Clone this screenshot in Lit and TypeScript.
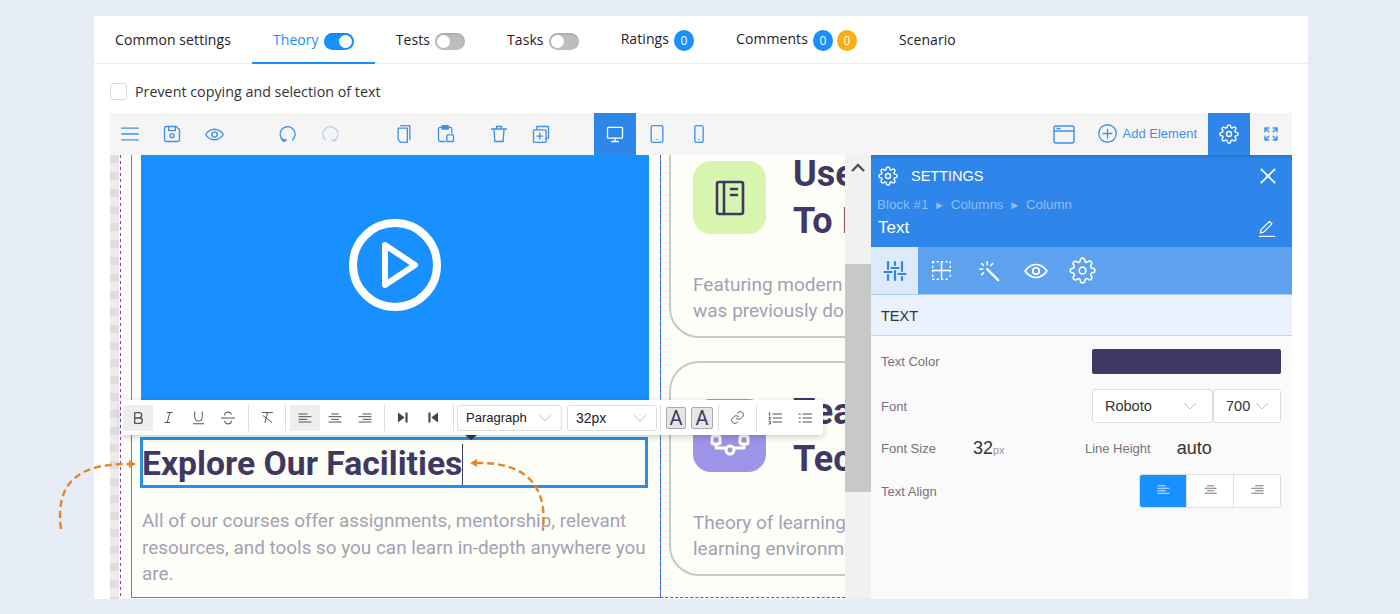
import { LitElement, css, html, svg } from "lit";
import { customElement } from "lit/decorators.js";

const GEAR = svg`<circle cx="12" cy="12" r="3"/><path d="M19.4 15a1.65 1.65 0 0 0 .33 1.82l.06.06a2 2 0 0 1 0 2.83 2 2 0 0 1-2.83 0l-.06-.06a1.65 1.65 0 0 0-1.82-.33 1.65 1.65 0 0 0-1 1.51V21a2 2 0 0 1-2 2 2 2 0 0 1-2-2v-.09A1.65 1.65 0 0 0 9 19.4a1.65 1.65 0 0 0-1.82.33l-.06.06a2 2 0 0 1-2.83 0 2 2 0 0 1 0-2.83l.06-.06a1.65 1.65 0 0 0 .33-1.82 1.65 1.65 0 0 0-1.51-1H3a2 2 0 0 1-2-2 2 2 0 0 1 2-2h.09A1.65 1.65 0 0 0 4.6 9a1.65 1.65 0 0 0-.33-1.82l-.06-.06a2 2 0 0 1 0-2.83 2 2 0 0 1 2.83 0l.06.06a1.65 1.65 0 0 0 1.82.33H9a1.65 1.65 0 0 0 1-1.51V3a2 2 0 0 1 2-2 2 2 0 0 1 2 2v.09a1.65 1.65 0 0 0 1 1.51 1.65 1.65 0 0 0 1.82-.33l.06-.06a2 2 0 0 1 2.83 0 2 2 0 0 1 0 2.83l-.06.06a1.65 1.65 0 0 0-.33 1.82V9a1.65 1.65 0 0 0 1.51 1H21a2 2 0 0 1 2 2 2 2 0 0 1-2 2h-.09a1.65 1.65 0 0 0-1.51 1z"/>`;
const EYE = svg`<path d="M2 12s3.6-6 10-6 10 6 10 6-3.6 6-10 6-10-6-10-6z"/><circle cx="12" cy="12" r="3"/>`;

const icon = (body: unknown, size = 20, sw = 1.6) => html`<svg
  width=${size}
  height=${size}
  viewBox="0 0 24 24"
  fill="none"
  stroke="currentColor"
  stroke-width=${sw}
  stroke-linecap="round"
  stroke-linejoin="round"
>${body}</svg>`;

const alignIcon = (kind: string) => {
  const short = kind === "left" ? [3, 15] : kind === "center" ? [7, 17] : [9, 21];
  const long = [3, 21];
  const rows = [
    [6, short],
    [10, long],
    [14, short],
    [18, long],
  ] as [number, number[]][];
  return svg`${rows.map(([y, r]) => svg`<path d="M${r[0]} ${y}H${r[1]}"/>`)}`;
};

const CHEVRON = html`<svg width="14" height="8" viewBox="0 0 14 8" fill="none" stroke="#c4c4c4" stroke-width="1"><path d="M1 1l6 6 6-6"/></svg>`;

@customElement("app-root")
export class AppRoot extends LitElement {
  static styles = css`
    :host {
      display: block;
      position: relative;
      width: 1400px;
      height: 614px;
      overflow: hidden;
      background: #e6ecf6;
      font-family: "Open Sans", sans-serif;
    }
    .card {
      margin: 0 0 0 94px;
      position: relative;
      top: 16px;
      width: 1214px;
      height: 583px;
      background: #fff;
      overflow: hidden;
    }
    .tabs {
      display: flex;
      height: 47px;
      border-bottom: 1px solid #eeeeee;
    }
    .tab {
      display: flex;
      align-items: center;
      gap: 5px;
      padding: 0 21px;
      font-size: 14px;
      color: #222;
      box-sizing: border-box;
      height: 48px;
      letter-spacing: 0.08px;
    }
    .tab .name {
      margin-bottom: 2px;
    }
    .tab.raised .name {
      margin-bottom: 4px;
    }
    .tab.active {
      color: #1890ff;
      border-bottom: 2px solid #1890ff;
      padding-top: 2px;
    }
    .toggle {
      width: 30px;
      height: 17px;
      margin-top: 3px;
      border-radius: 9px;
      background: #bdbdbd;
      position: relative;
      box-shadow: inset 0 1px 2px rgba(0, 0, 0, 0.15);
    }
    .toggle::after {
      content: "";
      position: absolute;
      left: 2px;
      top: 2px;
      width: 13px;
      height: 13px;
      border-radius: 50%;
      background: #fff;
    }
    .toggle.on {
      background: #1890ff;
    }
    .toggle.on::after {
      left: 15px;
    }
    .badge {
      width: 20px;
      height: 21px;
      border-radius: 50%;
      background: #1890ff;
      color: #fff;
      font-size: 12px;
      display: flex;
      align-items: center;
      justify-content: center;
    }
    .badge.warn {
      background: #faad14;
      margin-left: -1px;
    }
    .check-row {
      display: flex;
      align-items: center;
      gap: 8px;
      height: 44px;
      padding: 5px 16px 0;
      font-size: 14.3px;
      color: #333;
      box-sizing: content-box;
    }
    .box {
      width: 15px;
      height: 15px;
      border: 1px solid #d9d9d9;
      border-radius: 3px;
    }
    .toolbar {
      display: flex;
      height: 42px;
      margin: 0 16px;
      background: #f5f5f5;
      color: #3f90ee;
      position: relative;
      z-index: 2;
    }
    .tb {
      width: 42px;
      height: 42px;
      display: flex;
      align-items: center;
      justify-content: center;
      flex: none;
    }
    .tb.first {
      margin-left: -1px;
    }
    .tb.gap {
      margin-left: 32px;
    }
    .tb.near {
      margin-left: 11px;
    }
    .tb.on {
      background: #2e86eb;
      color: #fff;
    }
    .tb.faded {
      color: #b5d3f6;
    }
    .spacer {
      flex: 1;
    }
    .add {
      display: flex;
      align-items: center;
      gap: 5px;
      font-size: 13px;
      padding: 0 11px 2px 12px;
      font-family: "Liberation Sans", sans-serif;
    }
    .main {
      display: flex;
      height: 444px;
      margin: 0 16px;
    }
    .canvas {
      position: relative;
      display: flex;
      width: 735px;
      flex: none;
      overflow: hidden;
      background: #fefef8;
      font-family: Roboto, sans-serif;
    }
    .strip {
      width: 9px;
      flex: none;
      background: repeating-linear-gradient(to bottom, #dedede 0 8px, #ececec 8px 17px);
    }
    .dash {
      width: 1px;
      flex: none;
      margin: 0 10px 0 1px;
      background: repeating-linear-gradient(to bottom, #a32fcf 0 3px, transparent 3px 6px);
    }
    .col-left {
      width: 519px;
      flex: none;
      height: 442px;
      border-left: 1px solid #1ea0dc;
      border-bottom: 1px solid #1ea0dc;
      padding-left: 9px;
      box-sizing: content-box;
    }
    .video {
      width: 508px;
      height: 260px;
      background: #1890ff;
      display: flex;
      align-items: center;
      justify-content: center;
      padding-bottom: 40px;
      box-sizing: border-box;
    }
    .heading-box {
      box-sizing: border-box;
      margin-top: 22px;
      margin-left: -1px;
      width: 508px;
      height: 51px;
      border: 3px solid #2a8fe4;
      font-size: 33.7px;
      font-weight: 700;
      color: #3f3862;
      text-indent: -1px;
      line-height: 47px;
      white-space: nowrap;
    }
    .caret {
      display: inline-block;
      width: 1px;
      height: 41px;
      background: #3f3862;
      vertical-align: -10px;
    }
    .lead {
      margin: 20px 0 0 1px;
      font-size: 18.9px;
      line-height: 26.5px;
      color: #a3a1b5;
      width: 512px;
    }
    .col-right {
      flex: 1;
      min-width: 0;
      height: 443px;
      position: relative;
      display: flex;
      flex-direction: column;
      justify-content: flex-end;
      gap: 23px;
      padding: 0 0 21px 9px;
      border-bottom: 1px dashed #a32fcf;
      box-sizing: border-box;
      background: repeating-linear-gradient(to bottom, #a32fcf 0 3px, #1ea0dc 3px 6px) left / 1px 100% no-repeat;
    }
    .feature {
      flex: none;
      box-sizing: border-box;
      width: 520px;
      height: 215px;
      padding: 26px 22px 0;
      border: 2px solid #c9c9c3;
      border-radius: 30px;
    }
    .feature-top {
      display: flex;
      align-items: center;
      gap: 27px;
      height: 94px;
    }
    .tile {
      width: 73px;
      height: 73px;
      border-radius: 18px;
      display: flex;
      align-items: center;
      justify-content: center;
      flex: none;
      margin-top: -1px;
    }
    .tile.green {
      background: #d6f5ae;
      color: #3f3862;
    }
    .tile.violet {
      background: #9d94e8;
      color: #fefef8;
    }
    .feature h3 {
      margin: 0;
      font-size: 36px;
      line-height: 47px;
      font-weight: 700;
      color: #3f3862;
      white-space: nowrap;
    }
    .feature p {
      margin: 27px 0 0;
      font-size: 19px;
      line-height: 26px;
      color: #a3a1b5;
      white-space: nowrap;
    }
    .scroll {
      position: relative;
      width: 26px;
      flex: none;
      background: #f1f1f1;
    }
    .thumb {
      position: absolute;
      left: 0;
      right: 0;
      top: 109px;
      height: 228px;
      background: #c8c8c8;
    }
    .scroll svg {
      position: absolute;
      left: 6px;
      top: 8px;
    }
    .panel {
      flex: 1;
      background: #fafafa;
      font-family: "Liberation Sans", sans-serif;
    }
    .panel-head {
      height: 92px;
      background: #2e86eb;
      color: #fff;
      padding: 0 14px 0 7px;
      box-sizing: border-box;
      box-shadow: inset 0 4px 4px -3px rgba(0, 0, 0, 0.2);
    }
    .title-row {
      display: flex;
      align-items: center;
      height: 41px;
      font-size: 14.5px;
      gap: 13px;
    }
    .title-row .spacer {
      flex: 1;
    }
    .crumbs {
      font-size: 13.4px;
      color: #8cbcf3;
      height: 17px;
      line-height: 17px;
      margin-left: -1px;
      white-space: nowrap;
    }
    .crumbs i {
      font-style: normal;
      font-size: 11px;
      padding: 0 2px;
    }
    .name-row {
      display: flex;
      justify-content: space-between;
      align-items: center;
      font-size: 17px;
      height: 30px;
      padding-right: 1px;
    }
    .panel-tabs {
      display: flex;
      height: 47px;
      background: #5ea1ef;
      color: #fff;
      border-bottom: 1px solid #a5cbf5;
    }
    .ptab {
      width: 47px;
      height: 47px;
      display: flex;
      align-items: center;
      justify-content: center;
    }
    .ptab.on {
      background: #dceafc;
      color: #2e86eb;
    }
    .section {
      height: 40px;
      line-height: 42px;
      padding-left: 10px;
      font-size: 14.5px;
      color: #333;
      background: #eaf3fd;
      border-bottom: 1px solid #b7d6f7;
    }
    .form {
      padding: 13px 11px 0 10px;
      display: flex;
      flex-direction: column;
      font-size: 13px;
      color: #77717f;
    }
    .row {
      display: flex;
      align-items: center;
    }
    .row .push {
      margin-left: auto;
    }
    .swatch {
      width: 189px;
      height: 25px;
      border-radius: 2px;
      background: #3f3862;
    }
    .row-font {
      margin-top: 15px;
      height: 34px;
    }
    .select {
      box-sizing: border-box;
      height: 34px;
      display: flex;
      align-items: center;
      justify-content: space-between;
      background: #fff;
      border: 1px solid #dddddd;
      border-radius: 3px;
      padding: 0 15px 0 12px;
      font-size: 14.5px;
      color: #333;
    }
    .select.family {
      width: 121px;
    }
    .select.weight {
      width: 68px;
      padding: 0 11px 0 12px;
    }
    .row-size {
      margin-top: 12px;
      height: 26px;
    }
    .size-value {
      margin-left: 37px;
      width: 112px;
      font-size: 18px;
      color: #333;
    }
    .size-value small {
      font-size: 11px;
      color: #9a9a9a;
    }
    .auto {
      margin-left: 26px;
      font-size: 18px;
      color: #333;
    }
    .row-align {
      margin-top: 13px;
      height: 34px;
    }
    .align-group {
      display: flex;
      box-sizing: border-box;
      width: 142px;
      height: 34px;
      border: 1px solid #dddddd;
      border-radius: 3px;
      background: #fff;
      overflow: hidden;
      color: #777;
    }
    .align-group span {
      flex: 1;
      display: flex;
      align-items: center;
      justify-content: center;
      padding-bottom: 4px;
      border-left: 1px solid #dddddd;
    }
    .align-group span.on {
      background: #1890ff;
      color: #cfe6ff;
      border-left: 0;
    }
    .float-bar {
      position: absolute;
      left: 11px;
      top: 245px;
      width: 702px;
      height: 35px;
      box-sizing: border-box;
      padding: 4px 0 4px 2px;
      display: flex;
      align-items: center;
      background: #fff;
      border-radius: 3px;
      box-shadow: 0 2px 6px rgba(0, 0, 0, 0.2);
      font-family: "Liberation Sans", sans-serif;
      color: #555;
    }
    .float-bar::after {
      content: "";
      position: absolute;
      left: 344px;
      top: 100%;
      border: 6px solid transparent;
      border-top: 5px solid #333;
      border-bottom: 0;
    }
    .fb {
      width: 30px;
      height: 26px;
      flex: none;
      display: flex;
      align-items: center;
      justify-content: center;
    }
    .fb.on {
      background: #eeeeee;
    }
    .fb.link {
      width: 34px;
      margin-left: 1px;
    }
    .sep {
      width: 1px;
      height: 26px;
      background: #dddddd;
      flex: none;
    }
    .sep.a {
      margin: 0 3px 0 5px;
    }
    .sep.b {
      margin: 0 4px 0 3px;
    }
    .sep.c {
      margin: 0 3px 0 4px;
    }
    .sep.d {
      margin: 0 3px 0 5px;
    }
    .sep.e {
      margin: 0 5px 0 3px;
    }
    .sep.f {
      margin: 0 0 0 5px;
    }
    .sep.g {
      margin: 0 3px 0 2px;
    }
    .fsel {
      box-sizing: border-box;
      height: 26px;
      display: flex;
      align-items: center;
      justify-content: space-between;
      border: 1px solid #dddddd;
      border-radius: 3px;
      padding: 0 9px 0 8px;
      color: #222;
      flex: none;
    }
    .fsel.para {
      width: 105px;
      font-size: 13px;
    }
    .fsel.size {
      width: 90px;
      margin-left: 5px;
      font-size: 14px;
    }
    .tone {
      box-sizing: border-box;
      width: 20px;
      height: 22px;
      flex: none;
      border: 1px solid #aaa;
      border-radius: 2px;
      background: #e6e6e6;
      color: #3f3862;
      font-size: 20px;
      line-height: 21px;
      text-align: center;
      font-family: Roboto, sans-serif;
    }
    .tone.second {
      width: 22px;
      margin-left: 5px;
    }
    .arrows {
      position: absolute;
      left: 0;
      top: 0;
      z-index: 5;
      pointer-events: none;
    }
  `;

  render() {
    return html`
      <div class="card">
        <div class="tabs">
          <div class="tab"><span class="name">Common settings</span></div>
          <div class="tab active">
            <span class="name">Theory</span><span class="toggle on"></span>
          </div>
          <div class="tab"><span class="name">Tests</span><span class="toggle"></span></div>
          <div class="tab"><span class="name">Tasks</span><span class="toggle"></span></div>
          <div class="tab raised">
            <span class="name">Ratings</span><span class="badge">0</span>
          </div>
          <div class="tab raised">
            <span class="name">Comments</span><span class="badge">0</span
            ><span class="badge warn">0</span>
          </div>
          <div class="tab"><span class="name">Scenario</span></div>
        </div>
        <div class="check-row">
          <span class="box"></span><span>Prevent copying and selection of text</span>
        </div>
        ${this.renderToolbar()}
        <div class="main">
          <div class="canvas">
            <div class="strip"></div>
            <div class="dash"></div>
            ${this.renderLeft()} ${this.renderRight()} ${this.renderFloatBar()}
          </div>
          <div class="scroll">
            <div class="thumb"></div>
            <svg width="14" height="9" viewBox="0 0 14 9" fill="none" stroke="#555" stroke-width="2.4"><path d="M1 8l6-6 6 6"/></svg>
          </div>
          ${this.renderPanel()}
        </div>
      </div>
      <svg class="arrows" width="1400" height="614" fill="none" stroke="#e8852a" stroke-width="2.4">
        <path stroke-dasharray="7 4" d="M61 529C56 490 70 463 130 464"/>
        <path fill="#e8852a" stroke="none" d="M129 460l7 4-7 4z"/>
        <path stroke-dasharray="7 4" d="M476 463C520 462 548 480 543 530"/>
        <path fill="#e8852a" stroke="none" d="M477 459l-7 4 7 4z"/>
      </svg>
    `;
  }

  renderToolbar() {
    return html`
      <div class="toolbar">
        <span class="tb first">${icon(svg`<path d="M2 5h20M2 12h20M2 19h20"/>`, 20, 1.6)}</span>
        <span class="tb">${icon(svg`<path d="M3 5a2 2 0 0 1 2-2h12l4 4v12a2 2 0 0 1-2 2H5a2 2 0 0 1-2-2z"/><path d="M8 3v5h8V3"/><circle cx="12" cy="14" r="2.4"/>`)}</span>
        <span class="tb">${icon(EYE, 21)}</span>
        <span class="tb gap">${icon(svg`<path d="M7 20A9 9 0 1 1 17.500 19"/><path d="M4 17l3 4 3-2" fill="currentColor"/>`)}</span>
        <span class="tb faded">${icon(svg`<path d="M17 20A9 9 0 1 0 6.500 19"/><path d="M20 17l-3 4-3-2" fill="currentColor"/>`)}</span>
        <span class="tb gap">${icon(svg`<path d="M8 2h11v17"/><path d="M5 5h11v17H8l-3-3z"/>`)}</span>
        <span class="tb">${icon(svg`<path d="M11 21H5a2 2 0 0 1-2-2V6a2 2 0 0 1 2-2h12a2 2 0 0 1 2 2v5"/><rect x="7" y="2" width="8" height="4" rx="1" fill="currentColor"/><rect x="13" y="13" width="8" height="8" rx="1"/>`)}</span>
        <span class="tb near">${icon(svg`<path d="M3 6h18M6 6l1 15h10l1-15M9 6V3h6v3"/>`)}</span>
        <span class="tb">${icon(svg`<path d="M7 6V3h14v14h-3"/><rect x="3" y="7" width="15" height="15" rx="1"/><path d="M10.500 11v7M7 14.500h7"/>`)}</span>
        <span class="tb gap on">${icon(svg`<rect x="3" y="4" width="18" height="13" rx="1"/><path d="M12 17v4M8 21h8"/>`)}</span>
        <span class="tb">${icon(svg`<rect x="5" y="2" width="14" height="20" rx="2"/><path d="M12 18.500v.1"/>`)}</span>
        <span class="tb">${icon(svg`<rect x="7" y="2" width="10" height="20" rx="2"/><path d="M12 18.500v.1"/>`)}</span>
        <span class="spacer"></span>
        <span class="tb">${icon(svg`<rect x="2" y="4" width="20" height="17" rx="2"/><path d="M2 9h20M5 6.500h3"/>`, 24, 1.4)}</span>
        <span class="add">${icon(svg`<circle cx="12" cy="12" r="10"/><path d="M12 7v10M7 12h10"/>`, 21, 1.5)}<span>Add Element</span></span>
        <span class="tb on">${icon(GEAR, 20, 1.7)}</span>
        <span class="tb">${icon(svg`<path d="M4 4l5 5M4 9V4h5M20 4l-5 5M20 9V4h-5M4 20l5-5M4 15v5h5M20 20l-5-5M20 15v5h-5"/>`, 18, 2)}</span>
      </div>
    `;
  }

  renderLeft() {
    return html`
      <div class="col-left">
        <div class="video">
          <svg width="94" height="94" viewBox="0 0 94 94" fill="none" stroke="#fff">
            <circle cx="47" cy="47" r="42" stroke-width="8"/>
            <path d="M37 27l30 20-30 20z" stroke-width="6" stroke-linejoin="round"/>
          </svg>
        </div>
        <div class="heading-box">Explore Our Facilities<span class="caret"></span></div>
        <div class="lead">
          All of our courses offer assignments, mentorship, relevant resources, and tools so
          you can learn in-depth anywhere you are.
        </div>
      </div>
    `;
  }

  renderRight() {
    return html`
      <div class="col-right">
        <div class="feature">
          <div class="feature-top">
            <span class="tile green">
              <svg width="30" height="36" viewBox="0 0 30 36" fill="none" stroke="currentColor" stroke-width="2.6" stroke-linecap="round" stroke-linejoin="round">
                <rect x="2" y="2" width="26" height="32" rx="2"/>
                <path d="M9 2v32M16 9h6M16 15h6"/>
              </svg>
            </span>
            <h3>Useful Resources<br />To Improve Your Skills</h3>
          </div>
          <p>Featuring modern tools, everything that<br />was previously done by hand is simple</p>
        </div>
        <div class="feature">
          <div class="feature-top">
            <span class="tile violet">
              <svg width="40" height="40" viewBox="0 0 40 40" fill="none" stroke="currentColor" stroke-width="3" stroke-linejoin="round">
                <rect x="14" y="2" width="12" height="10" rx="2"/>
                <rect x="2" y="20" width="8" height="8" rx="2"/>
                <rect x="30" y="20" width="8" height="8" rx="2"/>
                <circle cx="20" cy="34" r="4"/>
                <path d="M6 28v4h10M34 28v4H24"/>
              </svg>
            </span>
            <h3>Teachers And<br />Technology</h3>
          </div>
          <p>Theory of learning in a modern and calm<br />learning environment for every student</p>
        </div>
      </div>
    `;
  }

  renderFloatBar() {
    return html`
      <div class="float-bar">
        <span class="fb on">${icon(svg`<path d="M7 4h6.500a4 4 0 0 1 0 8H7zM7 12h7.500a4 4 0 0 1 0 8H7z"/>`, 16, 2)}</span>
        <span class="fb">${icon(svg`<path d="M10 4h8M6 20h8M14 4l-4 16"/>`, 15, 1.6)}</span>
        <span class="fb">${icon(svg`<path d="M6 3v9a6 6 0 0 0 12 0V3M4 22h16"/>`, 15, 1.6)}</span>
        <span class="fb">${icon(svg`<path d="M2 12h20M17 6c-1-2-3-3-5-3-3 0-5 2-5 4.500M7 17c1 2 3 4 5 4 3 0 5-2 5-4.500"/>`, 16, 1.6)}</span>
        <span class="sep a"></span>
        <span class="fb">${icon(svg`<path d="M4 4h16M12 4l-4 16M5 9l14 11"/>`, 15, 1.6)}</span>
        <span class="sep b"></span>
        <span class="fb on">${icon(alignIcon("left"), 16, 1.5)}</span>
        <span class="fb">${icon(alignIcon("center"), 16, 1.5)}</span>
        <span class="fb">${icon(alignIcon("right"), 16, 1.5)}</span>
        <span class="sep c"></span>
        <span class="fb"><svg width="10" height="11" viewBox="0 0 12 12" fill="#444"><path d="M0 0l8 6-8 6zM9 0h2.500v12H9z"/></svg></span>
        <span class="fb"><svg width="10" height="11" viewBox="0 0 12 12" fill="#444"><path d="M12 0L4 6l8 6zM.5 0H3v12H.5z"/></svg></span>
        <span class="sep d"></span>
        <span class="fsel para">Paragraph ${CHEVRON}</span>
        <span class="fsel size">32px ${CHEVRON}</span>
        <span class="sep e"></span>
        <span class="tone">A</span>
        <span class="tone second">A</span>
        <span class="sep f"></span>
        <span class="fb link">${icon(svg`<path d="M10 13a5 5 0 0 0 7.500.5l3-3a5 5 0 0 0-7-7l-1.700 1.700"/><path d="M14 11a5 5 0 0 0-7.500-.5l-3 3a5 5 0 0 0 7 7l1.700-1.700"/>`, 15, 1.6)}</span>
        <span class="sep g"></span>
        <span class="fb">${icon(svg`<path d="M9 6h13M9 12h13M9 18h13M3 5l1-1v4M3 11h2l-2 3h2M3 17h2v4H3"/>`, 16, 1.5)}</span>
        <span class="fb">${icon(svg`<path d="M9 6h13M9 12h13M9 18h13M3 6h2M3 12h2M3 18h2"/>`, 16, 1.7)}</span>
      </div>
    `;
  }

  renderPanel() {
    return html`
      <div class="panel">
        <div class="panel-head">
          <div class="title-row">
            ${icon(GEAR, 20, 1.7)}<span>SETTINGS</span><span class="spacer"></span>
            ${icon(svg`<path d="M4 4l16 16M20 4L4 20"/>`, 20, 2)}
          </div>
          <div class="crumbs">Block #1 <i>►</i> Columns <i>►</i> Column</div>
          <div class="name-row">
            <span>Text</span>
            ${icon(svg`<path d="M4 18l1-4L15 4l3 3L8 17zM3 22h18"/>`, 20, 1.5)}
          </div>
        </div>
        <div class="panel-tabs">
          <span class="ptab on">${icon(svg`<path d="M5 3v7M5 16v5M12 3v3M12 12v9M19 3v9M19 18v3M1.500 13h7M8.500 9h7M15.500 15h7"/>`, 24, 2.2)}</span>
          <span class="ptab">${icon(svg`<path d="M12 2v20M2 12h20"/><path stroke-dasharray="1.500 3.500" d="M2 2h20M2 22h20M2 2v20M22 2v20"/>`, 21, 1.6)}</span>
          <span class="ptab">${icon(svg`<path d="M10 10l12 12" stroke-width="2.600"/><path d="M10 2v3M4 4l2 2M2 10h3M16 4l-2 2M4 16l2-2"/>`, 22, 1.8)}</span>
          <span class="ptab">${icon(EYE, 26, 1.6)}</span>
          <span class="ptab">${icon(GEAR, 27, 1.4)}</span>
        </div>
        <div class="section">TEXT</div>
        <div class="form">
          <div class="row">
            <span>Text Color</span><span class="swatch push"></span>
          </div>
          <div class="row row-font">
            <span>Font</span>
            <span class="select family push">Roboto ${CHEVRON}</span>
            <span class="select weight">700 ${CHEVRON}</span>
          </div>
          <div class="row row-size">
            <span>Font Size</span>
            <span class="size-value">32<small>px</small></span>
            <span>Line Height</span>
            <span class="auto">auto</span>
          </div>
          <div class="row row-align">
            <span>Text Align</span>
            <div class="align-group push">
              <span class="on">${icon(alignIcon("left"), 15, 1.6)}</span>
              <span>${icon(alignIcon("center"), 15, 1.6)}</span>
              <span>${icon(alignIcon("right"), 15, 1.6)}</span>
            </div>
          </div>
        </div>
      </div>
    `;
  }
}
